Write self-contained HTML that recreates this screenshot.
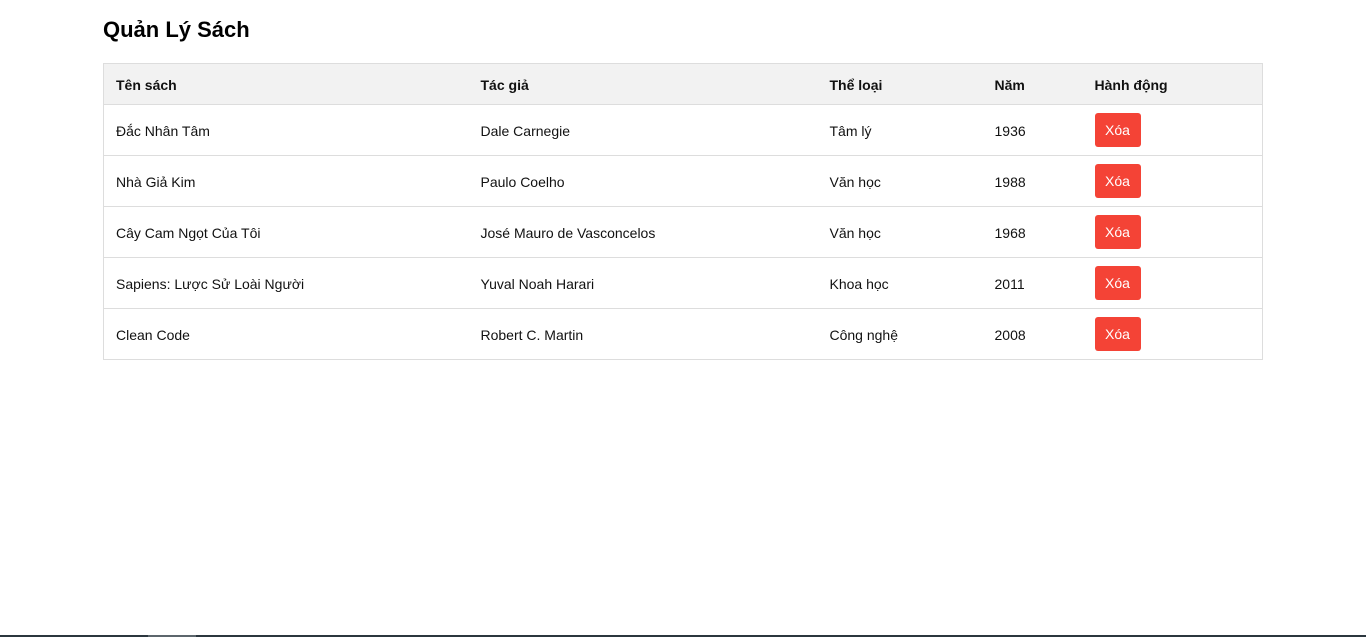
<!DOCTYPE html>
<html><head><meta charset="utf-8"><style>
body{margin:0;background:#fff;font-family:"Liberation Sans","DejaVu Sans",sans-serif;width:1366px;height:637px;overflow:hidden;position:relative}
h1{position:absolute;left:103px;top:17px;margin:0;font-size:22px;font-weight:bold;color:#000}
table{position:absolute;left:103px;top:63px;border-collapse:collapse;width:1159px;table-layout:fixed;font-size:14px;color:#111;border:1px solid #ddd}
th,td{border-top:1px solid #ddd;border-bottom:1px solid #ddd;padding:0 12px;text-align:left;padding-top:1px}
th{background:#f2f2f2;height:39px;font-weight:bold}
td{height:49px}
button{background:#f44336;color:#fff;border:0;border-radius:3px;font:14px "Liberation Sans",sans-serif;width:46px;height:34px;padding:0;position:relative;top:-1px}
.bar{position:absolute;left:0;bottom:0;width:1366px;height:2px;background:#2b363e}
.bar i{position:absolute;left:148px;width:48px;height:2px;background:#5c666c}
</style></head><body>
<h1>Quản Lý Sách</h1>
<table>
<colgroup><col style="width:365px"><col style="width:349px"><col style="width:165px"><col style="width:100px"><col style="width:180px"></colgroup>
<tr><th>Tên sách</th><th>Tác giả</th><th>Thể loại</th><th>Năm</th><th>Hành động</th></tr>
<tr><td>Đắc Nhân Tâm</td><td>Dale Carnegie</td><td>Tâm lý</td><td>1936</td><td><button>Xóa</button></td></tr>
<tr><td>Nhà Giả Kim</td><td>Paulo Coelho</td><td>Văn học</td><td>1988</td><td><button>Xóa</button></td></tr>
<tr><td>Cây Cam Ngọt Của Tôi</td><td>José Mauro de Vasconcelos</td><td>Văn học</td><td>1968</td><td><button>Xóa</button></td></tr>
<tr><td>Sapiens: Lược Sử Loài Người</td><td>Yuval Noah Harari</td><td>Khoa học</td><td>2011</td><td><button>Xóa</button></td></tr>
<tr><td>Clean Code</td><td>Robert C. Martin</td><td>Công nghệ</td><td>2008</td><td><button>Xóa</button></td></tr>
</table>
<div class="bar"><i></i></div>
</body></html>
